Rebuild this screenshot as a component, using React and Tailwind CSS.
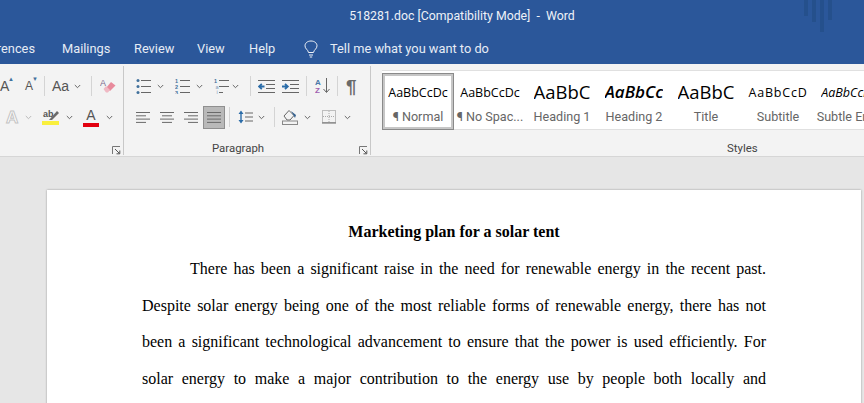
const Chev = ({ className = "" }) => (
  <svg width="7" height="5" viewBox="0 0 7 5" className={className}>
    <path d="M0.8 1 L3.5 3.7 L6.2 1" fill="none" stroke="#666" strokeWidth="1" />
  </svg>
);

const Sep = ({ h = "h-[20px]" }) => <div className={`w-px ${h} bg-[#d4d4d4]`} />;

const Launcher = () => (
  <svg width="9" height="9" viewBox="0 0 9 9">
    <path d="M0.5 8 V0.5 H8" fill="none" stroke="#777" />
    <path d="M3 3 L7.5 7.5 M7.8 4.5 V7.8 H4.5" fill="none" stroke="#555" />
  </svg>
);

const Lines = ({ kind = "left" }) => {
  const rows = {
    left: [[0, 14], [0, 10], [0, 14], [0, 10]],
    center: [[0, 14], [2, 10], [0, 14], [2, 10]],
    right: [[0, 14], [4, 10], [0, 14], [4, 10]],
    full: [[0, 14], [0, 14], [0, 14], [0, 14]],
  }[kind];
  return (
    <svg width="14" height="11" viewBox="0 0 14 11">
      {rows.map((r, i) => (
        <rect key={i} x={r[0]} y={i * 3.3} width={r[1]} height="1" fill="#6a6a6a" />
      ))}
    </svg>
  );
};

const ListIcon = ({ type }) => {
  const ys = [1, 7, 13];
  return (
    <svg width="15" height="15" viewBox="0 0 15 15">
      {ys.map((y, i) => (
        <rect key={y} x="5" y={y} width={type === "multi" && i === 2 ? 4 : 10} height="1" fill="#666" />
      ))}
      {type === "bullet" && ys.map((y) => <circle key={y} cx="2" cy={y + 0.5} r="1.5" fill="#41719c" />)}
      {type === "num" &&
        ys.map((y, i) => (
          <text key={y} x="0" y={y + 2.5} fontSize="5.5" fill="#41719c" fontFamily="Liberation Sans" fontWeight="bold">
            {i + 1}
          </text>
        ))}
      {type === "multi" && (
        <>
          <text x="0" y="3.5" fontSize="5.5" fill="#41719c" fontFamily="Liberation Sans" fontWeight="bold">1</text>
          <text x="1.5" y="9.5" fontSize="5.5" fill="#7d9cba" fontFamily="Liberation Sans">a</text>
          <text x="2.5" y="15" fontSize="5.5" fill="#7d9cba" fontFamily="Liberation Sans">i</text>
        </>
      )}
    </svg>
  );
};

const IndentIcon = ({ dir }) => (
  <svg width="17" height="13" viewBox="0 0 17 13">
    {[0, 4, 8, 12].map((y) => (
      <rect key={y} x={y === 0 || y === 12 ? 0 : 8} y={y} width={y === 0 || y === 12 ? 17 : 9} height="1" fill="#666" />
    ))}
    {dir === "l" ? (
      <path d="M6.5 6.5 H1.5 M3.8 3.8 L1 6.5 L3.8 9.2" fill="none" stroke="#2b6ca8" strokeWidth="1.8" />
    ) : (
      <path d="M0 6.5 H5.5 M3 3.8 L5.8 6.5 L3 9.2" fill="none" stroke="#2b6ca8" strokeWidth="1.8" />
    )}
  </svg>
);

const StyleCell = ({ sample, label, cls, w, sel }) => (
  <div
    className={`flex flex-col items-center overflow-hidden shrink-0 ${w} ${
      sel ? "h-[57px] border-[3px] border-[#c6c6c6] outline outline-1 outline-[#8a8a8a] -outline-offset-1 bg-white" : "h-[57px]"
    }`}
  >
    <div className={`h-[29px] max-w-[60px] overflow-hidden flex items-end whitespace-nowrap text-black ${sel ? "mt-0" : "mt-[3px]"} ${cls}`}>{sample}</div>
    <div className="mt-[4px] text-[12.6px] leading-[16px] text-[#666] whitespace-nowrap font-['Roboto',sans-serif]">{label}</div>
  </div>
);

const TextLine = ({ children }) => (
  <p className="h-[36.6px] leading-[36.6px] text-[16px] [text-align-last:justify] text-justify text-black">{children}</p>
);

export default function App() {
  return (
    <div className="w-[864px] h-[403px] overflow-hidden flex flex-col bg-[#e6e6e6] font-['Open_Sans','Liberation_Sans',sans-serif]">
      {/* Title bar */}
      <header className="relative h-[64px] shrink-0 bg-[#2b579a] text-white font-['Roboto',sans-serif]">
        <div className="h-[32px] flex items-center justify-center pl-[60px]">
          <span className="text-[12.3px] text-[#eef2f8] whitespace-pre">518281.doc [Compatibility Mode]  -  Word</span>
        </div>
        <nav className="h-[32px] pt-[2px] flex items-center text-[12.8px] text-[#e6ecf5] whitespace-nowrap">
          <span className="w-[62px] pr-[27px] flex justify-end overflow-hidden">erences</span>
          <span className="w-[72px]">Mailings</span>
          <span className="w-[63px]">Review</span>
          <span className="w-[52px]">View</span>
          <span className="w-[55px]">Help</span>
          <svg width="14" height="18" viewBox="0 0 14 18" className="mr-[12px]">
            <path d="M4.5 12.5 C4 9.5 1 9 1 5.8 C1 3 3.6 1 7 1 C10.4 1 13 3 13 5.8 C13 9 10 9.5 9.5 12.5 Z M5 15 H9 M5.8 17 H8.2" fill="none" stroke="#f0f3f8" strokeWidth="1" />
          </svg>
          <span>Tell me what you want to do</span>
        </nav>
        <div className="absolute left-[804px] top-0 flex gap-[4px] opacity-40">
          {[16, 22, 32, 20].map((h, i) => (
            <div key={i} className="w-[4px] bg-[#1e4679]" style={{ height: h }} />
          ))}
        </div>
      </header>

      {/* Ribbon */}
      <section className="h-[93px] shrink-0 flex bg-[#f3f3f3] border-b border-[#d6d6d6]">
        {/* Font group */}
        <div className="relative w-[124px] shrink-0 border-r border-[#c8c8c8] h-[89px] mt-[2px]">
          <div className="flex items-center h-[20px] mt-[10px] text-[#555] font-['Liberation_Sans',sans-serif]">
            <span className="w-[25px] text-[14px] relative">A<span className="absolute left-[8px] -top-[1px] text-[6px] text-[#41719c]">▲</span></span>
            <span className="w-[19px] text-[12px] relative">A<span className="absolute left-[7px] -top-[2px] text-[6px] text-[#41719c]">▼</span></span>
            <Sep />
            <span className="ml-[7px] text-[14px] text-[#555]">Aa</span>
            <Chev className="ml-[5px]" />
            <div className="ml-[10px]"><Sep /></div>
            <svg width="16" height="16" viewBox="0 0 16 16" className="ml-[8px]">
              <text x="0" y="8" fontSize="9" fill="#7b6a8f" fontFamily="Liberation Sans">A</text>
              <path d="M6 10 L11 4 L15.5 7.5 L10 13 Z" fill="#e88a9c" />
              <path d="M3.5 11 L6 8 L10 12 L8 14.5 L6 14.5 Z" fill="#f0b9c4" />
            </svg>
          </div>
          <div className="flex items-center h-[20px] mt-[11px] font-['Liberation_Sans',sans-serif]">
            <span className="ml-[6px] w-[14px] text-[17px] font-bold leading-none text-white [-webkit-text-stroke:1px_#c4c4c4]">A</span>
            <Chev className="ml-[5px] opacity-40" />
            <svg width="18" height="16" viewBox="0 0 18 16" className="ml-[10px]">
              <text x="1" y="8" fontSize="9" fontWeight="bold" fill="#555" fontFamily="Liberation Sans">ab</text>
              <path d="M7 11 L15 2 L17 4 L10 11 Z" fill="#6a6a6a" />
              <rect x="0" y="12" width="17" height="4" fill="#f9ef3d" />
            </svg>
            <Chev className="ml-[6px]" />
            <div className="ml-[10px] w-[16px] h-[19px] flex flex-col items-center">
              <span className="text-[14px] leading-[14px] text-[#555]">A</span>
              <div className="w-[16px] h-[4px] bg-[#e2000f] mt-[1px]" />
            </div>
            <Chev className="ml-[7px]" />
          </div>
          <div className="absolute left-[112px] bottom-[0px]"><Launcher /></div>
        </div>

        {/* Paragraph group */}
        <div className="relative w-[247px] shrink-0 border-r border-[#c8c8c8] h-[89px] mt-[2px]">
          <div className="flex items-center h-[20px] mt-[10px]">
            <div className="ml-[12px]"><ListIcon type="bullet" /></div>
            <Chev className="ml-[6px]" />
            <div className="ml-[11px]"><ListIcon type="num" /></div>
            <Chev className="ml-[6px]" />
            <div className="ml-[11px]"><ListIcon type="multi" /></div>
            <Chev className="ml-[3px]" />
            <div className="ml-[11px]"><Sep /></div>
            <div className="ml-[7px]"><IndentIcon dir="l" /></div>
            <div className="ml-[7px]"><IndentIcon dir="r" /></div>
            <div className="ml-[7px]"><Sep /></div>
            <svg width="16" height="16" viewBox="0 0 16 16" className="ml-[8px]">
              <text x="0" y="7" fontSize="8" fill="#4b79a8" fontFamily="Liberation Sans" fontWeight="bold">A</text>
              <text x="0" y="15" fontSize="8" fill="#a05fb0" fontFamily="Liberation Sans" fontWeight="bold">Z</text>
              <path d="M11.5 0 V14 M8.5 11 L11.5 14.5 L14.5 11" fill="none" stroke="#666" />
            </svg>
            <div className="ml-[6px]"><Sep /></div>
            <span className="ml-[8px] text-[19px] leading-none font-bold text-[#6a6a6a] font-['Liberation_Sans']">¶</span>
          </div>
          <div className="flex items-center h-[24px] mt-[9px]">
            <div className="ml-[12px] flex"><Lines kind="left" /></div>
            <div className="ml-[10px] flex"><Lines kind="center" /></div>
            <div className="ml-[10px] flex"><Lines kind="right" /></div>
            <div className="ml-[5px] w-[22px] h-[23px] bg-[#b9b9b9] border border-[#8f8f8f] flex items-center justify-center"><Lines kind="full" /></div>
            <div className="ml-[4px]"><Sep /></div>
            <svg width="15" height="16" viewBox="0 0 15 16" className="ml-[8px]">
              <path d="M3 4 V12" stroke="#2b6ca8" strokeWidth="1.4" />
              <path d="M0.5 5 L3 1.5 L5.5 5 Z M0.5 11 L3 14.5 L5.5 11 Z" fill="#2b6ca8" />
              <path d="M7 4 H15 M7 8 H15 M7 12 H15" stroke="#666" />
            </svg>
            <Chev className="ml-[5px]" />
            <div className="ml-[9px]"><Sep /></div>
            <svg width="16" height="16" viewBox="0 0 16 16" className="ml-[7px]">
              <path d="M2 7 L7 1.5 L12 6.5 L8 11 H5 Z" fill="none" stroke="#666" />
              <path d="M9 2 L14 6 L13 9 Z" fill="#35618f" />
              <rect x="0.5" y="12" width="15" height="3.5" fill="none" stroke="#888" />
            </svg>
            <Chev className="ml-[6px]" />
            <svg width="14" height="14" viewBox="0 0 14 14" className="ml-[11px]">
              <rect x="0.5" y="0.5" width="13" height="12" fill="none" stroke="#888" strokeDasharray="1 1" />
              <path d="M7 1 V13 M1 6.5 H13" stroke="#aaa" strokeDasharray="1 1" />
              <path d="M0 13 H14" stroke="#666" />
            </svg>
            <Chev className="ml-[8px]" />
          </div>
          <div className="absolute left-[88px] bottom-[-1px] text-[11.4px] leading-[16px] text-[#444] font-['Roboto',sans-serif]">Paragraph</div>
          <div className="absolute left-[235px] bottom-[0px]"><Launcher /></div>
        </div>

        {/* Styles group */}
        <div className="relative flex-1 min-w-0 overflow-hidden h-[89px] mt-[2px]">
          <div className="ml-[11px] mt-[4px] pt-[2px] h-[60px] flex bg-white border-y border-[#e0e0e0]">
            <StyleCell sel w="w-[72px]" sample="AaBbCcDc" label="¶ Normal" cls="text-[12.5px] leading-[18px] pb-[3px]" />
            <StyleCell w="w-[72px]" sample="AaBbCcDc" label="¶ No Spac..." cls="text-[12.5px] leading-[18px] pb-[3px]" />
            <StyleCell w="w-[72px]" sample="AaBbC" label="Heading 1" cls="text-[18.5px] leading-[26px]" />
            <StyleCell w="w-[72px]" sample="AaBbCc" label="Heading 2" cls="max-w-[58px] text-[17px] italic font-semibold leading-[24px] pb-[1px]" />
            <StyleCell w="w-[72px]" sample="AaBbC" label="Title" cls="text-[18.5px] leading-[26px] font-medium" />
            <StyleCell w="w-[72px]" sample="AaBbCcD" label="Subtitle" cls="text-[12.5px] leading-[18px] pb-[3px] text-[#555] tracking-[0.8px]" />
            <StyleCell w="w-[72px]" sample="AaBbCcDd" label="Subtle Em..." cls="text-[12.5px] leading-[18px] pb-[3px] italic text-[#555]" />
          </div>
          <div className="absolute left-[356px] bottom-[-1px] text-[11.4px] leading-[16px] text-[#444] font-['Roboto',sans-serif]">Styles</div>
        </div>
      </section>

      {/* Document */}
      <main className="flex-1 min-h-0 overflow-hidden pt-[33px] pl-[47px]">
        <div className="w-[814px] h-[300px] bg-white shadow-[0_0_2px_rgba(0,0,0,0.35)] pl-[95px] pr-[95px] pt-[23px] font-['Liberation_Serif',serif]">
          <h1 className="h-[38px] text-center text-[16px] font-bold leading-[37px] text-black">Marketing plan for a solar tent</h1>
          <TextLine><span className="inline-block w-[48px]" />There has been a significant raise in the need for renewable energy in the recent past.</TextLine>
          <TextLine>Despite solar energy being one of the most reliable forms of renewable energy, there has not</TextLine>
          <TextLine>been a significant technological advancement to ensure that the power is used efficiently. For</TextLine>
          <TextLine>solar energy to make a major contribution to the energy use by people both locally and</TextLine>
        </div>
      </main>
    </div>
  );
}
